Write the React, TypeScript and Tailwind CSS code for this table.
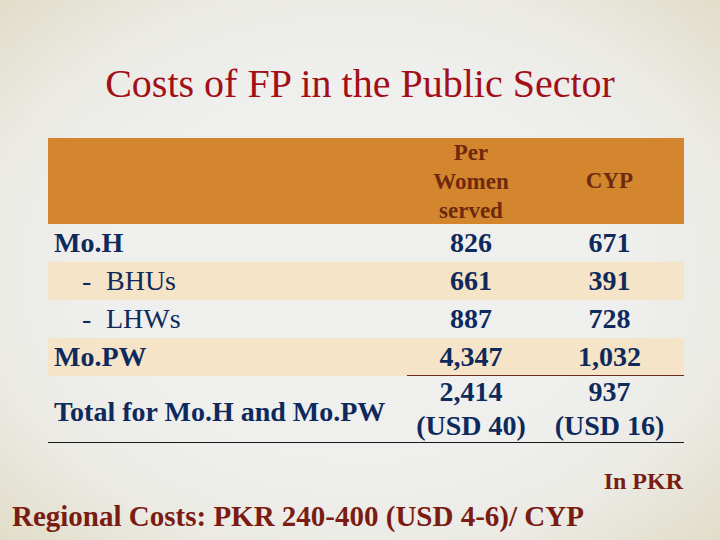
import React from "react";

type Row = {
  label: string;
  sub?: boolean;
  perWoman: string;
  cyp: string;
  shaded?: boolean;
};

const rows: Row[] = [
  { label: "Mo.H", perWoman: "826", cyp: "671" },
  { label: "BHUs", sub: true, perWoman: "661", cyp: "391", shaded: true },
  { label: "LHWs", sub: true, perWoman: "887", cyp: "728" },
  { label: "Mo.PW", perWoman: "4,347", cyp: "1,032", shaded: true },
];

export default function App() {
  return (
    <div className="w-[720px] h-[540px] overflow-hidden flex flex-col font-['Liberation_Serif',serif] bg-[radial-gradient(ellipse_at_center,#efefee_50%,#ebeae4_75%,#e1ddc8_100%)]">
      {/* Title */}
      <h1 className="shrink-0 pt-[62px] h-[138px] text-center text-[40px] leading-[44px] font-normal font-['Liberation_Serif',serif] text-[#a30f18]">
        Costs of FP in the Public Sector
      </h1>

      {/* Table */}
      <div className="shrink-0 ml-[48px] w-[636px] grid grid-cols-[359px_128px_149px] text-[#0e2a5c] text-[28px]">
        {/* Header */}
        <div className="h-[86px] bg-[#d4862f]" />
        <div className="h-[86px] bg-[#d4862f] flex items-center justify-center text-center text-[23px] leading-[29px] font-bold text-[#6e2a0c]">
          <span>
            Per
            <br />
            Women
            <br />
            served
          </span>
        </div>
        <div className="h-[86px] bg-[#d4862f] flex items-center justify-center text-[23px] font-bold text-[#6e2a0c]">
          CYP
        </div>

        {rows.map((r) => {
          const bg = r.shaded ? "bg-[#f6e4c9]" : "";
          const line = r.label === "Mo.PW" ? "border-b border-[#6b2a1a]" : "";
          return (
            <React.Fragment key={r.label}>
              <div className={`h-[38px] flex items-center ${bg} ${r.sub ? "pl-[34px] font-normal" : "pl-[6px] font-bold"}`}>
                {r.sub ? (
                  <>
                    <span className="w-[24px]">-</span>
                    <span>{r.label}</span>
                  </>
                ) : (
                  r.label
                )}
              </div>
              <div className={`h-[38px] flex items-center justify-center font-bold ${bg} ${line}`}>
                {r.perWoman}
              </div>
              <div className={`h-[38px] flex items-center justify-center font-bold ${bg} ${line}`}>
                {r.cyp}
              </div>
            </React.Fragment>
          );
        })}

        {/* Total */}
        <div className="h-[67px] flex items-center pl-[6px] pt-[6px] font-bold border-b border-[#1a1a1a]">
          Total for Mo.H and Mo.PW
        </div>
        <div className="h-[67px] flex flex-col items-center justify-center leading-[34px] font-bold border-b border-[#1a1a1a]">
          <span>2,414</span>
          <span>(USD 40)</span>
        </div>
        <div className="h-[67px] flex flex-col items-center justify-center leading-[34px] font-bold border-b border-[#1a1a1a]">
          <span>937</span>
          <span>(USD 16)</span>
        </div>
      </div>

      {/* Unit */}
      <div className="shrink-0 mt-[24px] pr-[37px] text-right text-[24px] leading-[28px] font-bold text-[#7a1c12]">
        In PKR
      </div>

      {/* Regional */}
      <div className="shrink-0 mt-[5px] pl-[12px] text-[29px] leading-[32px] font-bold text-[#7a1c12]">
        Regional Costs: PKR 240-400 (USD 4-6)/ CYP
      </div>
    </div>
  );
}
